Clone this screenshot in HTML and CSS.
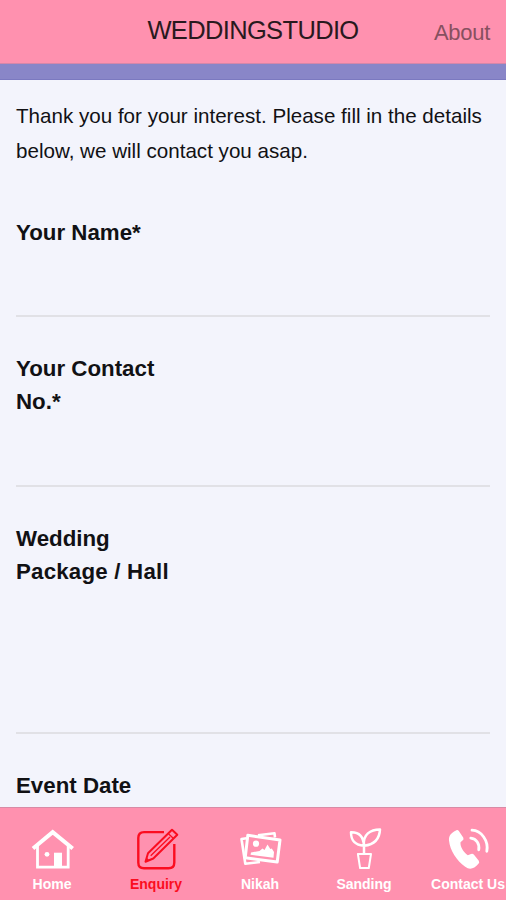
FILE: index.html
```
<!DOCTYPE html>
<html lang="en">
<head>
  <meta charset="UTF-8" />
  <meta name="viewport" content="width=device-width, initial-scale=1" />
  <title>Weddingstudio</title>
  <link rel="stylesheet" href="styles.css">
</head>
<body>
  <header class="header">
    <h1>WEDDINGSTUDIO</h1>
    <a class="about" href="#">About</a>
  </header>
  <div class="strip"></div>

  <main class="content">
    <p class="intro">Thank you for your interest. Please fill in the details<br>below, we will contact you asap.</p>
    <div class="field name-field">
      <label>Your Name*</label>
    </div>
    <div class="field contact-field">
      <label>Your Contact No.*</label>
    </div>
    <div class="field package-field">
      <label>Wedding <span class="wide">Package / Hall</span></label>
    </div>
    <div class="field">
      <label>Event Date</label>
    </div>
  </main>

  <nav class="tabs">
    <a class="tab" href="#">
      <svg viewBox="0 0 48 48" fill="none" stroke="currentColor" stroke-width="2.8">
        <path d="M5 22.5L24.7 6.2L44.7 22.5" stroke-width="4" />
        <path d="M9.5 20V41.2H40.2V20" />
        <path d="M26 26.7H34V41H26z" fill="currentColor" stroke="none" />
        <circle cx="19" cy="28.3" r="2.4" fill="currentColor" stroke="none" />
      </svg>
      <span>Home</span>
    </a>
    <a class="tab active" href="#">
      <svg viewBox="0 0 48 48" fill="none" stroke="currentColor" stroke-width="2.4">
        <path d="M32 6.1H12Q6.3 6.1 6.3 12V36.5Q6.3 42.3 12 42.3H36.5Q42.3 42.3 42.3 36.5V18" />
        <path d="M13.5 35.7L16 27.3L40 3.7L45.3 8.7L21.3 32.5Z" stroke-width="2" stroke-linejoin="round" />
        <path d="M36.2 7.5L41.5 12.5M18.7 29.8L38 11" stroke-width="1.3" />
        <path d="M13 36.2L14.6 31.5L17.7 34.5Z" fill="currentColor" stroke="none" />
      </svg>
      <span>Enquiry</span>
    </a>
    <a class="tab" href="#">
      <svg viewBox="0 0 48 48" fill="none" stroke="currentColor" stroke-width="2.6" stroke-linejoin="round">
        <path d="M10.5 12.2L5.5 13L9.3 37.7L24 36M22 9.3L38.5 7.3L39 11.5" />
        <path d="M11.8 9.3L44 14L41.2 36L9.2 31.8Z" stroke-width="3" />
        <circle cx="20" cy="17.7" r="3.1" fill="currentColor" stroke="none" />
        <path d="M14.5 28.8L15 26.4L23.5 25L26.5 22.5L28.5 24L31.5 18.5L34.3 23L35.8 22.5L38 26L37.5 31.7Z" fill="currentColor" stroke="none" />
      </svg>
      <span>Nikah</span>
    </a>
    <a class="tab" href="#">
      <svg viewBox="0 0 48 48" fill="none" stroke="currentColor" stroke-width="2.5" stroke-linejoin="round">
        <path d="M24 28V19.8C13.5 18.8 11 13.5 11 6.2C19 6 23.5 10.8 24 19.8C22.5 8.5 30.5 3.5 40 3.4C39.6 12.8 35 18.5 24 19.8" />
        <path d="M17.9 28H31L28.8 42H20.1Z" stroke-width="2" />
      </svg>
      <span>Sanding</span>
    </a>
    <a class="tab" href="#">
      <svg viewBox="0 0 48 48" fill="none" stroke="currentColor" stroke-width="2.8" stroke-linecap="round">
        <path d="M11.5 4.8Q13.5 3.2 15 5.2L19.2 11.4Q20.3 13.3 18.5 14.6L16.5 16.2C16 20.5 19.5 26.2 23.8 29.3L27 28Q28.8 27.3 30.2 29L34.8 34.8Q36 36.8 34 38.3C30.5 42.3 26 44.5 21.2 40.8C12.5 34.5 6 24.5 5 14.5C4.5 9.5 7.5 7 11.5 4.8Z" fill="currentColor" stroke="none" />
        <path d="M28 4.2C37.5 4.5 44.8 15 42.8 25.3M26.8 12.2C32.5 12.8 35.8 18 34.7 23.8" />
      </svg>
      <span>Contact Us</span>
    </a>
  </nav>
</body>
</html>
```
FILE: styles.css
```
* {
  box-sizing: border-box;
}

body {
  margin: 0;
  height: 900px;
  display: flex;
  flex-direction: column;
  overflow: hidden;
  font-family: "Liberation Sans", Arial, sans-serif;
  background-color: #f3f4fc;
  color: #111114;
}

.header {
  display: grid;
  grid-template-columns: 1fr auto 1fr;
  flex: none;
  height: 64px;
  padding: 0 16px;
  background-color: #ff91af;
  border-bottom: 1px solid #d587a9;
}

h1 {
  grid-column: 2;
  margin: 0;
  font-size: 25.5px;
  font-weight: normal;
  line-height: 60px;
  letter-spacing: -0.65px;
  color: #29191e;
}

.about {
  justify-self: end;
  font-size: 22px;
  line-height: 66px;
  letter-spacing: -0.3px;
  color: #87505f;
  text-decoration: none;
}

.strip {
  flex: none;
  height: 16px;
  background-color: #8986c8;
  border-bottom: 1px solid #7b79c0;
}

.content {
  flex: 1;
  min-height: 0;
  padding: 18px 16px 0;
  overflow: hidden;
}

.intro {
  margin: 0 0 47px;
  font-size: 20.6px;
  line-height: 35px;
  white-space: nowrap;
}

.field {
  margin-bottom: 34px;
}

.field label {
  display: block;
  width: 170px;
  padding-top: 0.5px;
  font-size: 22.3px;
  font-weight: bold;
  line-height: 33.4px;
}

.wide {
  letter-spacing: 0.2px;
}

.name-field {
  height: 102px;
  border-bottom: 2px solid #e1e1e6;
}

.contact-field {
  height: 136px;
  border-bottom: 2px solid #e1e1e6;
}

.package-field {
  height: 213px;
  border-bottom: 2px solid #e1e1e6;
}

.tabs {
  display: flex;
  flex: none;
  height: 93px;
  background-color: #ff91af;
  border-top: 1px solid #d88ba6;
}

.tab {
  display: flex;
  flex: 0 0 104px;
  flex-direction: column;
  align-items: center;
  padding-top: 18px;
  color: #fff;
  text-decoration: none;
  white-space: nowrap;
}

.tab svg {
  width: 48px;
  height: 48px;
}

.tab span {
  font-size: 14px;
  font-weight: bold;
  line-height: 21px;
}

.tab.active {
  color: #fb0d20;
}
```
